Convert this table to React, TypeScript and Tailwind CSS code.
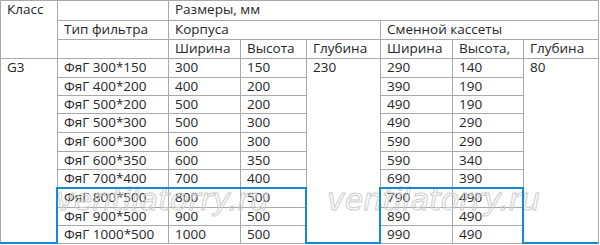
const rows = [
  ["ФяГ 300*150", "300", "150", "290", "140"],
  ["ФяГ 400*200", "400", "200", "390", "190"],
  ["ФяГ 500*200", "500", "200", "490", "190"],
  ["ФяГ 500*300", "500", "300", "490", "290"],
  ["ФяГ 600*300", "600", "300", "590", "290"],
  ["ФяГ 600*350", "600", "350", "590", "340"],
  ["ФяГ 700*400", "700", "400", "690", "390"],
  ["ФяГ 800*500", "800", "500", "790", "490"],
  ["ФяГ 900*500", "900", "500", "890", "490"],
  ["ФяГ 1000*500", "1000", "500", "990", "490"],
];

const rowH = ["h-[19px]", "h-[18px]", "h-[18px]", "h-[19px]", "h-[19px]", "h-[18px]", "h-[19px]", "h-[19px]", "h-[18px]", "h-[18px]"];

const cell = "border border-[#a9a9a9] px-[6px] pt-[1px] pb-0 align-top text-left font-normal leading-[15px]";

export default function App() {
  return (
    <div className="relative w-[600px] h-[245px] overflow-hidden bg-white text-[#262626] font-['Open_Sans',sans-serif] text-[13.5px]">
      <table className="w-[599px] table-fixed border-collapse">
        <colgroup>
          <col className="w-[57px]" />
          <col className="w-[111px]" />
          <col className="w-[72px]" />
          <col className="w-[66px]" />
          <col className="w-[74px]" />
          <col className="w-[72px]" />
          <col className="w-[71px]" />
          <col className="w-[75px]" />
        </colgroup>
        <thead>
          <tr className="h-[20px]">
            <th rowSpan={3} className={cell}>Класс</th>
            <th className={cell}></th>
            <th colSpan={6} className={cell}>Размеры, мм</th>
          </tr>
          <tr className="h-[19px]">
            <th className={cell}>Тип фильтра</th>
            <th colSpan={3} className={cell}>Корпуса</th>
            <th colSpan={3} className={cell}>Сменной кассеты</th>
          </tr>
          <tr className="h-[19px]">
            <th className={cell}></th>
            <th className={cell}>Ширина</th>
            <th className={cell}>Высота</th>
            <th className={cell}>Глубина</th>
            <th className={cell}>Ширина</th>
            <th className={cell}>Высота,</th>
            <th className={cell}>Глубина</th>
          </tr>
        </thead>
        <tbody>
          {rows.map((r, i) => (
            <tr key={r[0]} className={rowH[i]}>
              {i === 0 && <td rowSpan={10} className={cell}>G3</td>}
              <td className={cell}>{r[0]}</td>
              <td className={cell}>{r[1]}</td>
              <td className={cell}>{r[2]}</td>
              {i === 0 && <td rowSpan={10} className={cell}>230</td>}
              <td className={cell}>{r[3]}</td>
              <td className={cell}>{r[4]}</td>
              {i === 0 && <td rowSpan={10} className={cell}>80</td>}
            </tr>
          ))}
        </tbody>
      </table>

      {/* watermark */}
      <span className="absolute left-[56px] top-[185px] italic text-[30px] leading-none text-transparent font-['DejaVu_Sans',sans-serif] [-webkit-text-stroke:1px_#cdcdcd]">
        ventilatorry.ru
      </span>
      <span className="absolute left-[327px] top-[185px] italic text-[30px] leading-none text-transparent font-['DejaVu_Sans',sans-serif] [-webkit-text-stroke:1px_#cdcdcd]">
        ventilatorry.ru
      </span>

      {/* blue highlight frames */}
      <svg className="absolute left-0 top-0" width="600" height="245">
        <polyline
          points="0,243 57,243 57,188 306,188 306,243 380,243 380,188 523,188 523,243 598,243"
          fill="none"
          stroke="#1589d6"
          strokeWidth="2"
        />
      </svg>
    </div>
  );
}
